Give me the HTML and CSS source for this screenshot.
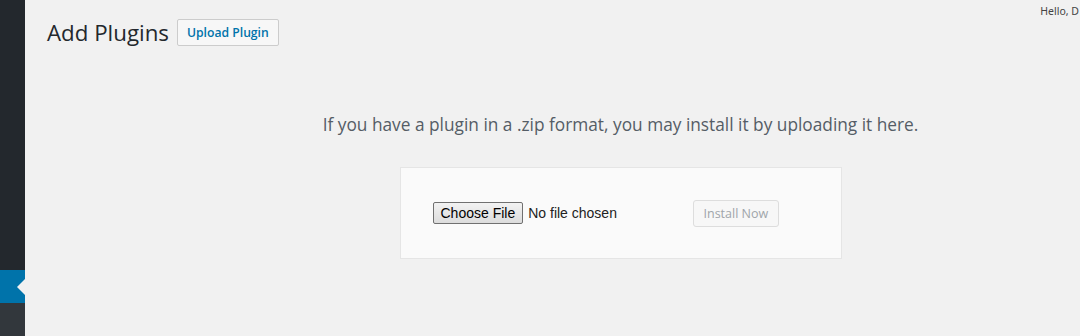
FILE: index.html
```html
<!DOCTYPE html>
<html lang="en">
<head>
  <meta charset="UTF-8">
  <title>Add Plugins</title>
  <link rel="stylesheet" href="styles.css">
</head>
<body>
  <div class="admin">
    <aside class="admin-menu">
      <div class="menu-top"></div>
      <div class="menu-current"><span class="menu-arrow"></span></div>
      <div class="menu-rest"></div>
    </aside>

    <main class="content">
      <div class="account">Hello, D</div>

      <div class="page-header">
        <h1>Add Plugins</h1>
        <a class="page-title-action">Upload Plugin</a>
      </div>

      <div class="upload-plugin">
        <p class="install-help">If you have a plugin in a .zip format, you may install it by uploading it here.</p>
        <form class="upload-form">
          <div class="file-field">
            <span class="file-button">Choose File</span>
            <span class="file-name">No file chosen</span>
          </div>
          <span class="install-button">Install Now</span>
        </form>
      </div>
    </main>
  </div>
</body>
</html>
```

FILE: styles.css
```css
/* Base */
:root {
  --menu-bg: #23282d;
  --menu-dark: #32373c;
  --menu-current: #0073aa;
  --page-bg: #f1f1f1;
  --text-color: #23282d;
  --help-color: #555d66;
  --link-color: #0073aa;
  --border-color: #e5e5e5;
}

* {
  margin: 0;
  padding: 0;
  box-sizing: border-box;
}

body {
  font-family: 'Open Sans', 'Noto Sans', sans-serif;
  background-color: var(--page-bg);
  color: var(--text-color);
  height: 336px;
  overflow: hidden;
}

/* Layout */
.admin {
  display: flex;
  height: 336px;
}

.admin-menu {
  width: 25px;
  display: flex;
  flex-direction: column;
  background-color: var(--menu-bg);
}

.menu-top {
  height: 270px;
}

.menu-current {
  height: 33px;
  background-color: var(--menu-current);
  display: flex;
  align-items: center;
  justify-content: flex-end;
}

.menu-arrow {
  width: 0;
  height: 0;
  border-top: 8px solid transparent;
  border-bottom: 8px solid transparent;
  border-right: 8px solid var(--page-bg);
}

.menu-rest {
  flex: 1;
  background-color: var(--menu-dark);
}

.content {
  flex: 1;
  position: relative;
  padding: 19px 0 0 22px;
}

.account {
  position: absolute;
  top: 4px;
  right: 1px;
  white-space: nowrap;
  font-size: 10.5px;
  color: #444;
  font-family: 'Noto Sans', sans-serif;
}

/* Header */
.page-header {
  display: flex;
  align-items: center;
  gap: 8px;
  height: 27px;
}

.page-header h1 {
  font-size: 22.3px;
  font-weight: 400;
  line-height: 27px;
  color: var(--text-color);
}

.page-title-action {
  display: inline-block;
  height: 27px;
  padding: 0 9px;
  border: 1px solid #ccc;
  border-radius: 2px;
  background-color: #f7f7f7;
  color: var(--link-color);
  font-size: 12.2px;
  font-weight: 600;
  line-height: 25px;
}

/* Upload */
.upload-plugin {
  display: flex;
  flex-direction: column;
  align-items: center;
  padding-top: 67px;
  padding-left: 114px;
}

.install-help {
  font-size: 17.3px;
  color: var(--help-color);
  line-height: 24px;
  margin-bottom: 30px;
}

.upload-form {
  width: 442px;
  height: 92px;
  display: flex;
  align-items: center;
  padding: 0 32px;
  background-color: #fafafa;
  border: 1px solid var(--border-color);
}

.file-field {
  display: flex;
  align-items: center;
  gap: 5px;
  width: 260px;
  font-family: 'Liberation Sans', Arial, sans-serif;
  font-size: 14px;
}

.file-button {
  display: inline-block;
  height: 22px;
  padding: 0 7px;
  border: 1px solid #707070;
  border-radius: 2px;
  background: linear-gradient(#f2f2f2, #dcdcdc);
  color: #000;
  line-height: 20px;
}

.file-name {
  color: #222;
}

.install-button {
  display: inline-block;
  height: 27px;
  padding: 0 10px;
  border: 1px solid #ddd;
  border-radius: 3px;
  background-color: #f7f7f7;
  color: #a0a5aa;
  font-size: 12.5px;
  line-height: 25px;
}
```
